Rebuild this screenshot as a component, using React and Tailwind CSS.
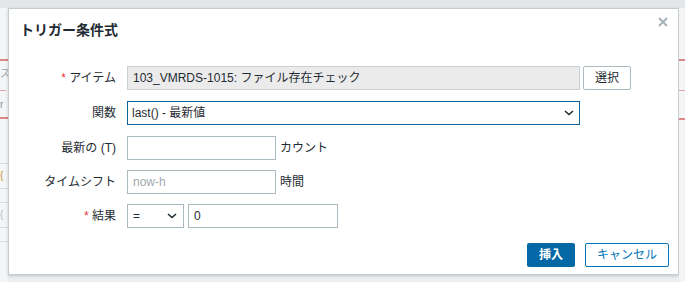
const font = { fontFamily: '"Liberation Sans", "Noto Sans CJK JP", sans-serif' };

function Chevron() {
  return (
    <svg width="10" height="6" viewBox="0 0 10 6" className="shrink-0">
      <path d="M1 1l4 3.5L9 1" fill="none" stroke="#1f2c33" strokeWidth="1.6" />
    </svg>
  );
}

function Row({ label, required, children }) {
  return (
    <div className="flex items-center h-[24px]">
      <div className="w-[108px] text-right text-[12px] text-[#1f2c33] pr-[1px]">
        {required && <span className="text-[#e33734]">* </span>}
        {label}
      </div>
      <div className="flex items-center ml-[10px]">{children}</div>
    </div>
  );
}

export default function App() {
  return (
    <div className="w-[685px] h-[282px] bg-[#eceeef] overflow-hidden flex flex-col" style={font}>
      <div className="h-[8px] shrink-0 bg-[#e4e7e9]" />
      <div className="flex flex-1">
        {/* page behind, left edge */}
        <div className="w-[8px] shrink-0 flex flex-col bg-[#f4f5f6]">
          <div className="h-[51px]" />
          <div className="h-[2px] bg-[#d9888a]" />
          <div className="h-[12px] text-[10px] text-[#9aa5ab] leading-[12px] mt-[7px]">ス</div>
          <div className="h-[1px] bg-[#e3a3a4] mt-[10px] w-[6px]" />
          <div className="h-[12px] text-[10px] text-[#8a959b] leading-[12px] mt-[8px]">r</div>
          <div className="h-[2px] bg-[#d9888a] mt-[6px]" />
          <div className="h-[1px] bg-[#d8dde0] mt-[44px]" />
          <div className="h-[12px] text-[10px] text-[#c49a45] leading-[12px] mt-[6px]">{"{"}</div>
          <div className="h-[1px] bg-[#d8dde0] mt-[6px]" />
          <div className="h-[1px] bg-[#d8dde0] mt-[13px]" />
          <div className="h-[12px] text-[10px] text-[#b8bfc3] leading-[12px] mt-[6px]">{"{"}</div>
          <div className="h-[1px] bg-[#d8dde0] mt-[6px]" />
          <div className="h-[1px] bg-[#d8dde0] mt-[13px]" />
        </div>

        {/* dialog */}
        <div className="w-[671px] h-[267px] bg-white border border-[#c5cdd1] shadow-[0_1px_3px_rgba(0,0,0,0.18)] flex flex-col">
          <div className="flex items-start justify-between h-[40px] pl-[11px] pr-[10px]">
            <div className="text-[14px] font-bold text-[#1f2c33] mt-[12px] leading-[18px]">トリガー条件式</div>
            <svg width="10" height="10" viewBox="0 0 10 10" className="mt-[8px]">
              <path d="M1 1l8 8M9 1L1 9" stroke="#a5b2b8" strokeWidth="2" />
            </svg>
          </div>

          <div className="flex flex-col gap-[11px] mt-[17px]">
            <Row label="アイテム" required>
              <div className="w-[453px] h-[24px] bg-[#ebebeb] border border-[#c8d1d5] flex items-center px-[5px] text-[12px] text-[#1f2c33]">
                103_VMRDS-1015: ファイル存在チェック
              </div>
              <button className="ml-[3px] w-[48px] h-[24px] bg-white border border-[#acbbc2] rounded-[2px] text-[12px] text-[#1f2c33]">
                選択
              </button>
            </Row>
            <Row label="関数">
              <div className="w-[453px] h-[24px] border border-[#0f65a0] flex items-center justify-between pl-[4px] pr-[5px] text-[12px] text-[#1f2c33]">
                <span>last() - 最新値</span>
                <Chevron />
              </div>
            </Row>
            <div className="flex flex-col gap-[10px]">
              <Row label="最新の (T)">
                <div className="w-[149px] h-[24px] border border-[#acbbc2]" />
                <span className="ml-[4px] text-[12px] text-[#1f2c33]">カウント</span>
              </Row>
              <Row label="タイムシフト">
                <div className="w-[149px] h-[24px] border border-[#acbbc2] flex items-center px-[5px] text-[12px] text-[#a0a9ae]">
                  now-h
                </div>
                <span className="ml-[4px] text-[12px] text-[#1f2c33]">時間</span>
              </Row>
              <Row label="結果" required>
                <div className="w-[57px] h-[24px] border border-[#acbbc2] flex items-center justify-between pl-[5px] pr-[6px] text-[12px] text-[#1f2c33]">
                  <span>=</span>
                  <Chevron />
                </div>
                <div className="ml-[4px] w-[150px] h-[24px] border border-[#acbbc2] flex items-center px-[5px] text-[12px] text-[#1f2c33]">
                  0
                </div>
              </Row>
            </div>
          </div>

          <div className="flex justify-end gap-[10px] pr-[9px] mt-[15px]">
            <button className="w-[48px] h-[24px] bg-[#0568a6] rounded-[2px] text-[12px] font-bold text-white">
              挿入
            </button>
            <button className="w-[84px] h-[24px] bg-white border border-[#0275b8] rounded-[2px] text-[12px] text-[#0275b8]">
              キャンセル
            </button>
          </div>
        </div>

        {/* page behind, right edge */}
        <div className="flex-1 flex flex-col bg-[#f4f5f6]">
          <div className="h-[51px]" />
          <div className="h-[2px] bg-[#d9888a]" />
          <div className="h-[1px] bg-[#e3a3a4] mt-[29px]" />
          <div className="h-[2px] bg-[#d9888a] mt-[27px]" />
        </div>
      </div>
    </div>
  );
}
